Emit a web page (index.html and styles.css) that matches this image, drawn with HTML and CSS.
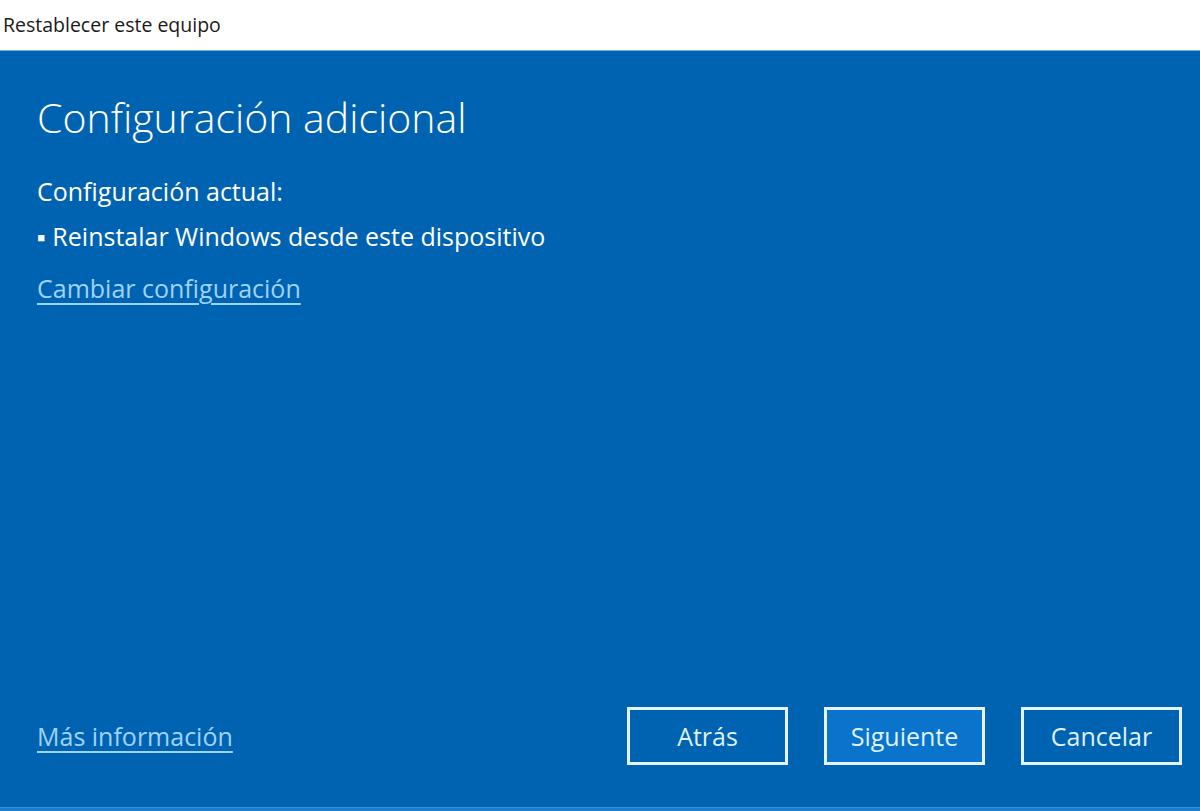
FILE: index.html
```html
<!DOCTYPE html>
<html lang="es">
<head>
  <meta charset="UTF-8">
  <title>Restablecer este equipo</title>
  <link rel="stylesheet" href="styles.css">
</head>
<body>
  <div class="titlebar">Restablecer este equipo</div>
  <div class="panel">
    <div class="content">
      <h1>Configuración adicional</h1>
      <p class="label">Configuración actual:</p>
      <p class="item">▪ Reinstalar Windows desde este dispositivo</p>
      <a class="link change">Cambiar configuración</a>
    </div>
    <div class="footer">
      <a class="link">Más información</a>
      <div class="buttons">
        <button class="btn">Atrás</button>
        <button class="btn primary">Siguiente</button>
        <button class="btn">Cancelar</button>
      </div>
    </div>
  </div>
  <div class="bottom"></div>
</body>
</html>
```
FILE: styles.css
```css
html, body {
  margin: 0;
  height: 100%;
}

body {
  display: flex;
  flex-direction: column;
  font-family: "Open Sans", "Noto Sans", sans-serif;
  background: #0063b1;
}

.titlebar {
  height: 51px;
  box-sizing: border-box;
  padding: 11px 0 0 3px;
  background: #fff;
  color: #1a1a1a;
  font-size: 19.5px;
  border-bottom: 1px solid #6fb2e6;
}

.panel {
  flex: 1;
  display: flex;
  flex-direction: column;
  background: #0063b1;
  color: #fff;
  padding: 0 18px 0 37px;
}

.content {
  flex: 1;
}

h1 {
  margin: 0;
  padding-top: 41px;
  font-weight: 300;
  font-size: 41px;
  line-height: 50px;
}

.label, .item {
  margin: 0;
  font-size: 25px;
  line-height: 30px;
}

.label {
  margin-top: 34px;
}

.item {
  margin-top: 15px;
}

.link {
  display: inline-block;
  color: #9fd3ff;
  font-size: 25px;
  line-height: 30px;
  text-decoration: underline;
  text-underline-offset: 5px;
  cursor: pointer;
}

.change {
  margin-top: 22px;
}

.footer {
  display: flex;
  align-items: center;
  justify-content: space-between;
  height: 58px;
  margin-bottom: 42px;
}

.buttons {
  display: flex;
  gap: 36px;
}

.btn {
  width: 161px;
  height: 58px;
  background: #0063b1;
  border: 3px solid #e4f3ff;
  color: #dff1ff;
  font-family: "Open Sans", "Noto Sans", sans-serif;
  font-size: 25px;
}

.btn.primary {
  background: #0a73cc;
}

.bottom {
  height: 3px;
  border-top: 1px solid #3b8fd0;
  background: #1a7dd0;
}
```
